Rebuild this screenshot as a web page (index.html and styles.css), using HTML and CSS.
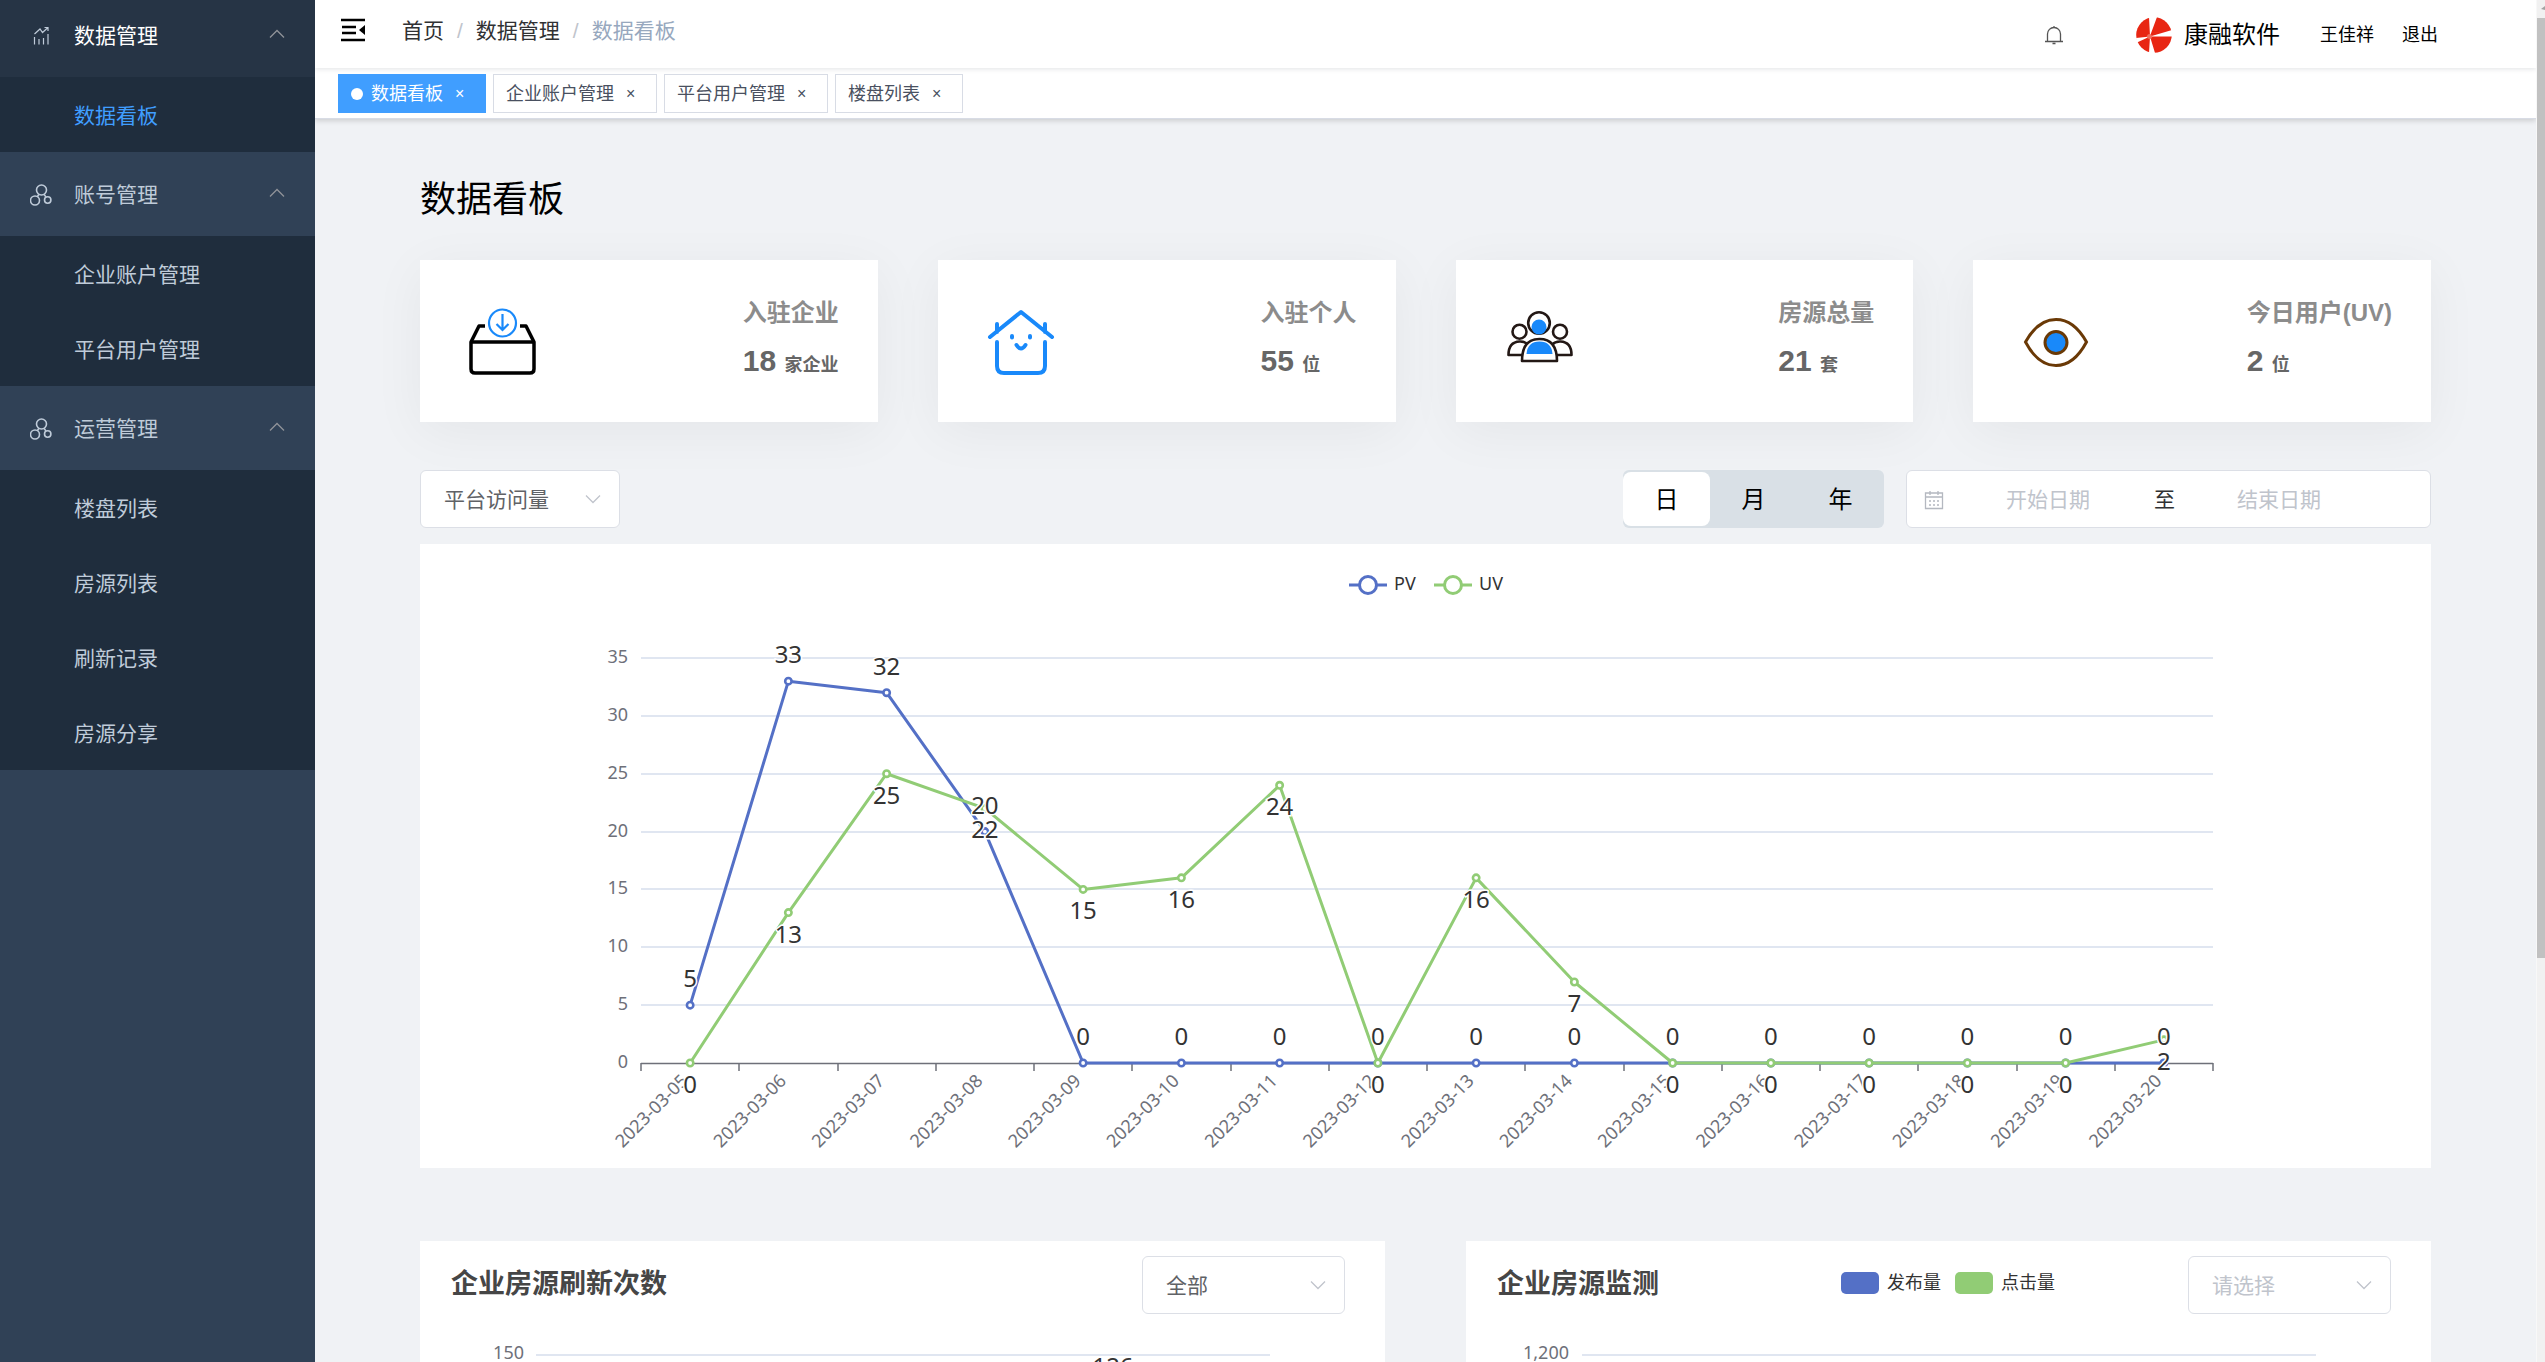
FILE: index.html
```html
<!DOCTYPE html>
<html lang="zh-CN">
<head>
<meta charset="utf-8">
<title>数据看板</title>
<link rel="stylesheet" href="styles.css">
</head>
<body>
<svg class="defs" aria-hidden="true">
  <symbol id="up" viewBox="0 0 16 10"><path d="M1 8.500 8 1.500l7 7" fill="none" stroke="currentColor" stroke-width="1.300"/></symbol>
  <symbol id="cluster" viewBox="0 0 22 22"><g fill="none" stroke="currentColor" stroke-width="1.600"><circle cx="11.500" cy="6" r="5"/><circle cx="5" cy="16.500" r="4.500"/><circle cx="17.700" cy="16" r="3.200"/><path d="M9 10.300 7.300 12.800M14 10.300l2 2.800"/></g></symbol>
</svg>
<div class="app">
  <nav class="sidebar">
    <ul class="menu">
      <li>
        <button class="group current"><svg class="gicon" viewBox="0 0 22 22"><path d="M4.500 12v7.500M9 14v5.500M13.500 13v6.500M18 9v10.500M4.500 9 10 4l2.500 3.500L18 2.500M14.500 2.500H18V6" fill="none" stroke="currentColor" stroke-width="1.200"/></svg><span>数据管理</span><svg class="up"><use href="#up"/></svg></button>
        <ul class="sub"><li><a class="active" href="#board">数据看板</a></li></ul>
      </li>
      <li>
        <button class="group"><svg class="gicon"><use href="#cluster"/></svg><span>账号管理</span><svg class="up"><use href="#up"/></svg></button>
        <ul class="sub"><li><a href="#company">企业账户管理</a></li><li><a href="#user">平台用户管理</a></li></ul>
      </li>
      <li>
        <button class="group"><svg class="gicon"><use href="#cluster"/></svg><span>运营管理</span><svg class="up"><use href="#up"/></svg></button>
        <ul class="sub"><li><a href="#estate">楼盘列表</a></li><li><a href="#house">房源列表</a></li><li><a href="#refresh">刷新记录</a></li><li><a href="#share">房源分享</a></li></ul>
      </li>
    </ul>
  </nav>
  <div class="page">
    <header class="navbar">
      <button class="fold" aria-label="收起菜单"><svg viewBox="0 0 24 24" width="24" height="24"><path d="M0 2h24M1 9h14M1 15h14M0 22h24" stroke="#000" stroke-width="2.400"/><path d="M24 7v10l-6-5z"/></svg></button>
      <nav class="crumbs"><a href="#home">首页</a><i>/</i><a href="#data">数据管理</a><i>/</i><span>数据看板</span></nav>
      <button class="bell" aria-label="通知"><svg viewBox="0 0 20 20" width="20" height="20"><path d="M1 16.500h18M3.500 16V9a6.500 6.500 0 0 1 13 0v7M10 1v2M8.500 18.500h3" fill="none" stroke="#555" stroke-width="1.300"/></svg></button>
      <div class="brand"><svg viewBox="0 0 36 36" width="36" height="36"><circle cx="18" cy="18" r="17.800" fill="#e82613"/><path d="M13 0 14 19 21 0zM36 13 14 19.500 36 19.500zM0 21 14 19.500 1 25.500zM13 36 14 19.500 19 36z" fill="#fff"/><circle cx="13.500" cy="19.500" r="2.500" fill="#f0705f"/></svg><span>康融软件</span></div>
      <a class="who" href="#me">王佳祥</a>
      <a class="out" href="#logout">退出</a>
    </header>
    <div class="tags">
      <a class="tag on" href="#board"><b class="dot"></b><span>数据看板</span><i>×</i></a>
      <a class="tag" href="#company"><span>企业账户管理</span><i>×</i></a>
      <a class="tag" href="#user"><span>平台用户管理</span><i>×</i></a>
      <a class="tag" href="#estate"><span>楼盘列表</span><i>×</i></a>
    </div>
    <main>
      <h1>数据看板</h1>
      <section class="cards">
        <article class="card">
          <svg viewBox="0 0 72 72" width="72" height="72"><g fill="none" stroke="#000" stroke-width="3.500" stroke-linejoin="round"><path d="M18 20h-6L4 36v27q0 4 4 4h55q4 0 4-4V36L59 20h-6"/><path d="M4 36h63"/></g><g fill="none" stroke="#1989fa" stroke-width="2.200"><circle cx="35.500" cy="17" r="13.500"/><path d="M35.500 8v16M29.500 18l6 6 6-6"/></g></svg>
          <dl><dt>入驻企业</dt><dd>18 <small>家企业</small></dd></dl>
        </article>
        <article class="card">
          <svg viewBox="0 0 72 72" width="72" height="72"><g fill="none" stroke="#1989fa" stroke-width="4" stroke-linecap="round" stroke-linejoin="round"><path d="M5 31 36 6l31 25M12 19v-1M60 19v-1M12 26v-8M60 26v-8M12 36v24q0 7 7 7h34q7 0 7-7V36"/><path d="M27 30v1.500M45 30v1.500M31.500 39q4.500 7 9 0"/></g></svg>
          <dl><dt>入驻个人</dt><dd>55 <small>位</small></dd></dl>
        </article>
        <article class="card">
          <svg viewBox="0 0 72 72" width="72" height="72"><g fill="#fff" stroke="#231815" stroke-width="2.600" stroke-linejoin="round"><circle cx="16.500" cy="25.700" r="7"/><circle cx="57" cy="25.700" r="7"/><path d="M5.500 49q0-13 11-13.500T28 49zM68.500 49q0-13-11-13.500T46 49z"/><circle cx="36" cy="17" r="10.800"/><path d="M19 55q0-22 17.500-22T54 55z"/></g><circle cx="36" cy="21" r="7.500" fill="#1989fa"/><path d="M23.500 48q1-12.500 13-12.500t13 12.500z" fill="#1989fa"/></svg>
          <dl><dt>房源总量</dt><dd>21 <small>套</small></dd></dl>
        </article>
        <article class="card">
          <svg viewBox="0 0 72 72" width="72" height="72"><path d="M5.500 36Q18 13.500 36 13.500T66.500 36Q54 59.500 36 59.500T5.500 36z" fill="none" stroke="#6a3906" stroke-width="3"/><circle cx="36" cy="36.500" r="11" fill="#1989fa" stroke="#6a3906" stroke-width="3"/></svg>
          <dl><dt>今日用户(UV)</dt><dd>2 <small>位</small></dd></dl>
        </article>
      </section>
      <section class="filters">
        <select class="pick" aria-label="指标"><option>平台访问量</option></select>
        <div class="seg"><button class="on">日</button><button>月</button><button>年</button></div>
        <div class="range">
          <svg viewBox="0 0 20 20" width="20" height="20"><path d="M1.500 3h17v15.500h-17zM1.500 7h17M6 1v4M14 1v4M5 11h2M9 11h2M13 11h2M5 15h2M9 15h2M13 15h2" fill="none" stroke="#b4b8c0" stroke-width="1.300"/></svg>
          <input aria-label="开始日期" placeholder="开始日期"><span>至</span><input aria-label="结束日期" placeholder="结束日期">
        </div>
      </section>
      <section class="panel"><svg id="visits" class="chart" viewBox="0 0 2011 624" role="img" aria-label="平台访问量"></svg></section>
      <section class="pair">
        <article class="panel half">
          <header><h2>企业房源刷新次数</h2><select class="pick" aria-label="企业"><option>全部</option></select></header>
          <svg id="refreshes" class="chart" viewBox="0 0 965 400"></svg>
        </article>
        <article class="panel half">
          <header><h2>企业房源监测</h2><div class="legend"><b class="blue"></b><span>发布量</span><b class="green"></b><span>点击量</span></div><select class="pick empty" aria-label="企业"><option>请选择</option></select></header>
          <svg id="monitor" class="chart" viewBox="0 0 965 400"></svg>
        </article>
      </section>
    </main>
  </div>
  <div class="scroll"><svg viewBox="0 0 8 18" width="8" height="18"><path d="M4 9l4-3v4z" fill="#a3a3a3"/></svg><div class="thumb"></div></div>
</div>
<script src="charts.js"></script>
</body>
</html>
```
FILE: styles.css
```css
* { box-sizing: border-box; }
body { margin: 0; height: 100vh; overflow: hidden; color: #000; background: #f0f2f5; font: 21px/30px "Liberation Sans", "Noto Sans CJK SC", sans-serif; }
ul, dl, dd, h1, h2 { margin: 0; padding: 0; }
ul { list-style: none; }
a { color: inherit; text-decoration: none; }
i { font-style: normal; }
button, select, input { font: inherit; color: inherit; border: 0; background: none; padding: 0; margin: 0; }
svg { display: block; flex: none; }
.defs { position: absolute; width: 0; height: 0; }
.app { display: flex; height: 100%; }

.sidebar { flex: none; width: 315px; background: #304156; color: #bfcbd9; overflow: hidden; }
.menu { margin-top: -7px; }
.group { display: flex; align-items: center; width: 100%; height: 84px; padding: 2px 30px 0; text-align: left; }
.group.current { background: #263445; color: #fff; }
.group span { flex: 1; }
.gicon { width: 22px; height: 22px; margin-right: 22px; color: #bfcbd9; }
.up { width: 16px; height: 10px; color: #909399; margin-bottom: 4px; }
.sub { background: #1f2d3d; }
.sub a { display: flex; align-items: center; height: 75px; padding: 2px 0 0 74px; }
.sub .active { color: #409eff; }

.page { flex: 1; min-width: 0; overflow: hidden; }
.navbar { position: relative; display: flex; align-items: center; height: 68px; padding: 2px 98px 0 26px; background: #fff; box-shadow: 0 1px 5px rgba(0, 21, 41, .12); }
.fold { margin-bottom: 10px; }
.crumbs { display: flex; gap: 13px; margin: 0 auto 8px 37px; color: #303133; }
.crumbs i { color: #c0c4cc; }
.crumbs span { color: #97a8be; }
.bell { margin-right: 72px; }
.brand { display: flex; align-items: center; gap: 12px; margin-right: 40px; font-size: 24px; }
.who, .out { font-size: 18px; }
.who { margin-right: 28px; }

.tags { display: flex; gap: 7px; height: 51px; padding: 6px 23px; background: #fff; border-bottom: 1px solid #d8dce5; box-shadow: 0 2px 5px rgba(0, 0, 0, .15); }
.tag { display: flex; align-items: center; height: 39px; padding: 1px 20px 0 12px; border: 1px solid #d8dce5; color: #495060; font-size: 18px; }
.tag i { width: 10px; margin-left: 12px; font-size: 16px; }
.tag.on { background: #409eff; border-color: #409eff; color: #fff; }
.dot { width: 12px; height: 12px; margin-right: 8px; border-radius: 50%; background: #fff; }

main { padding: 54px 105px 0; }
h1 { font-weight: 400; font-size: 36px; line-height: 54px; }
.cards { display: grid; grid-template-columns: repeat(4, 1fr); gap: 60px; margin-top: 33px; }
.card { display: flex; justify-content: space-between; height: 162px; padding: 35px 39px 0 47px; background: #fff; box-shadow: 0 10px 50px rgba(0, 0, 0, .05); }
.card > svg { margin-top: 11px; }
.card dt { color: #8c8c8c; font-weight: 700; font-size: 24px; line-height: 36px; }
.card dd { margin-top: 12px; color: #666; font-weight: 700; font-size: 30px; line-height: 36px; }
.card small { font-size: 18px; }

.filters { display: flex; align-items: center; height: 58px; margin: 48px 0 16px; }
.pick { appearance: none; width: 200px; height: 58px; padding: 1px 23px 0; border: 1px solid #dcdfe6; border-radius: 6px; color: #606266; background: #fff url("data:image/svg+xml,%3Csvg xmlns='http://www.w3.org/2000/svg' width='16' height='10'%3E%3Cpath d='M1 1.500l7 7 7-7' fill='none' stroke='%23c0c4cc' stroke-width='1.300'/%3E%3C/svg%3E") no-repeat right 18px center; }
.pick.empty { color: #c0c4cc; }
.seg { display: flex; margin-left: auto; width: 261px; height: 58px; padding: 2px 0; border-radius: 6px; background: #d9e0e6; font-size: 24px; }
.seg button { flex: 1; padding-top: 2px; }
.seg .on { background: #fff; border-radius: 8px; }
.range { display: flex; align-items: center; width: 525px; height: 58px; margin-left: 22px; padding: 1px 17px 0; border: 1px solid #dcdfe6; border-radius: 6px; background: #fff; color: #303133; }
.range input { width: 208px; padding-left: 62px; }
.range input:first-of-type { width: 210px; }
.range input::placeholder { color: #c0c4cc; }

.panel { background: #fff; }
.chart { width: 100%; height: auto; font-family: "Noto Sans", "Noto Sans CJK SC", sans-serif; }
.chart .axis { font-size: 18px; fill: #6e7079; }
.chart .key { font-size: 18px; fill: #333; }
.chart .value { font-size: 24px; fill: #333; stroke: #fff; stroke-width: 3px; paint-order: stroke; text-anchor: middle; }
.pair { display: grid; grid-template-columns: 1fr 1fr; gap: 81px; margin-top: 73px; }
.half header { display: flex; align-items: center; padding: 15px 40px 0 31px; }
.half .pick { width: 203px; margin-left: auto; }
h2 { margin-bottom: 2px; color: #464646; font-size: 27px; line-height: 40px; }
.legend { display: flex; align-items: center; margin: 0 0 5px 182px; color: #333; font-size: 18px; }
.legend b { width: 38px; height: 22px; margin-right: 8px; border-radius: 5px; }
.legend span { margin-right: 14px; }
.legend span:last-child { margin-right: 0; }
.blue { background: #5470c6; }
.green { background: #91cc75; }

.scroll { flex: none; width: 9px; background: #f1f1f1; border-left: 1px solid #f8f8f8; }
.thumb { height: 69%; background: #c1c1c1; }
```
FILE: charts.js
```
const NS = 'http://www.w3.org/2000/svg';
function add(svg, tag, attrs, text) {
  const el = document.createElementNS(NS, tag);
  for (const k in attrs) el.setAttribute(k, attrs[k]);
  if (text !== undefined) el.textContent = text;
  svg.appendChild(el);
}

const blue = '#5470c6', green = '#91cc75';
const pv = [5, 33, 32, 20, 0, 0, 0, 0, 0, 0, 0, 0, 0, 0, 0, 0];
const uv = [0, 13, 25, 22, 15, 16, 24, 0, 16, 7, 0, 0, 0, 0, 0, 2];
const chart = document.getElementById('visits');
const left = 221, right = 1793, base = 519, top35 = 114;
const step = (right - left) / pv.length;
const px = i => left + step * (i + 0.5);
const py = v => base - v * (base - top35) / 35;

[['PV', 929, blue], ['UV', 1014, green]].forEach(([name, x, color]) => {
  add(chart, 'path', { d: `M${x} 41h38`, stroke: color, 'stroke-width': 3 });
  add(chart, 'circle', { cx: x + 19, cy: 41, r: 8.5, fill: '#fff', stroke: color, 'stroke-width': 3 });
  add(chart, 'text', { x: x + 45, y: 46, class: 'key' }, name);
});
for (let v = 0; v <= 35; v += 5) {
  const y = Math.round(py(v));
  if (v) add(chart, 'path', { d: `M${left} ${y}H${right}`, stroke: '#e0e6f1', 'stroke-width': 2 });
  add(chart, 'text', { x: 208, y: y + 5, class: 'axis', 'text-anchor': 'end' }, v);
}
add(chart, 'path', { d: `M${left} ${base + 0.5}H${right}`, stroke: '#6e7079', 'stroke-width': 1.5 });
for (let i = 0; i <= pv.length; i++) {
  add(chart, 'path', { d: `M${Math.round(left + step * i)} ${base}v8`, stroke: '#6e7079', 'stroke-width': 1.5 });
}
pv.forEach((_, i) => {
  const day = String(i + 5).padStart(2, '0');
  add(chart, 'text', { class: 'axis', 'text-anchor': 'end', transform: `translate(${px(i) - 1} ${base + 19}) rotate(-45)` }, `2023-03-${day}`);
});
[[pv, blue], [uv, green]].forEach(([data, color]) => {
  add(chart, 'polyline', { points: data.map((v, i) => `${px(i)},${py(v)}`).join(' '), fill: 'none', stroke: color, 'stroke-width': 3, 'stroke-linejoin': 'bevel' });
  data.forEach((v, i) => add(chart, 'circle', { cx: px(i), cy: py(v), r: 3.2, fill: '#fff', stroke: color, 'stroke-width': 2.6 }));
});
[[pv, -18], [uv, 30]].forEach(([data, dy]) => {
  data.forEach((v, i) => add(chart, 'text', { class: 'value', x: px(i), y: py(v) + dy }, v));
});

[['refreshes', '150', 104, 116, 850], ['monitor', '1,200', 103, 116, 850]].forEach(([id, label, tx, x1, x2]) => {
  const svg = document.getElementById(id);
  add(svg, 'path', { d: `M${x1} 41H${x2}`, stroke: '#e0e6f1', 'stroke-width': 2 });
  add(svg, 'text', { x: tx, y: 45, class: 'axis', 'text-anchor': 'end' }, label);
});
add(document.getElementById('refreshes'), 'text', { class: 'value', x: 693, y: 61 }, 126);
```
